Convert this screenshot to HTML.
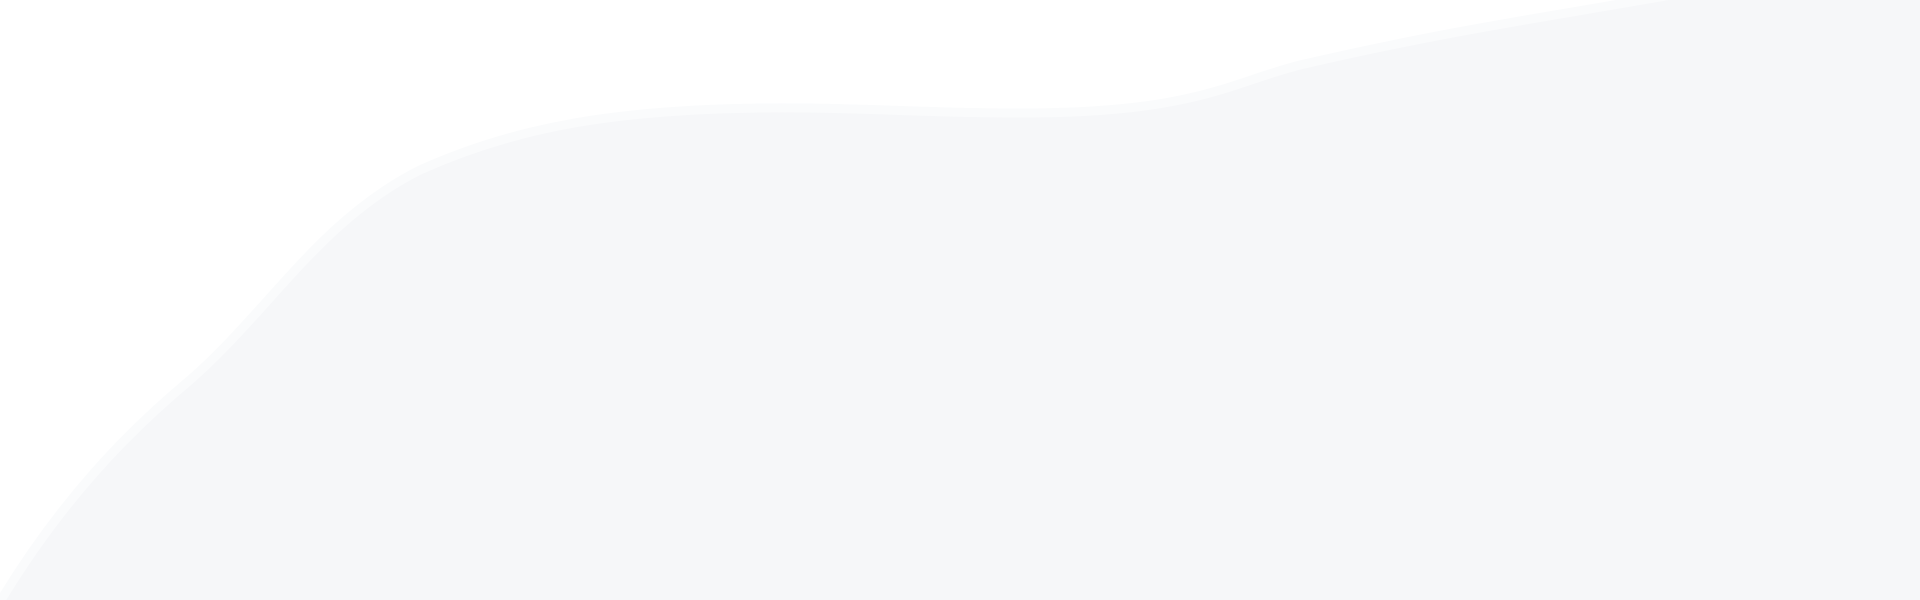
<!DOCTYPE html>
<html><head><style>html,body{margin:0;padding:0;background:#fff;width:1920px;height:600px;overflow:hidden}</style></head>
<body>
<svg width="1920" height="600" viewBox="0 0 1920 600" style="display:block">
<path d="M-5,610 C60,500 130,430 190,380 C270,310 320,220 420,170 C520,125 620,110 760,108 C900,106 1060,125 1180,100 C1230,90 1260,75 1300,65 C1450,30 1560,15 1671,-5 L1930,-5 L1930,610 Z" fill="#f6f7f9" stroke="#fafbfc" stroke-width="9"/>
</svg>
</body></html>
